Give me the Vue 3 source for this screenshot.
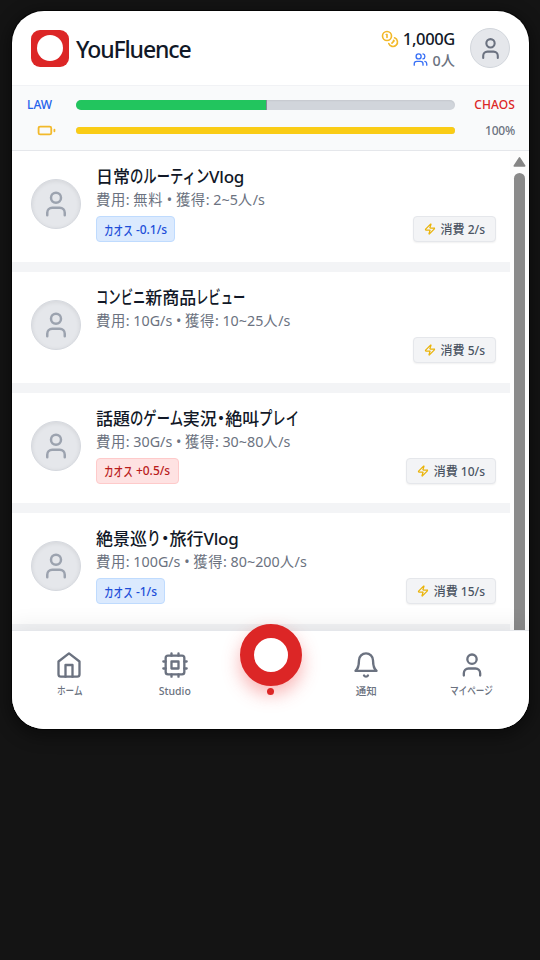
<script setup>
import { h } from 'vue'

const videos = [
  { title: '日常のルーティンVlog', squeeze: 0.785, info: '費用: 無料 • 獲得: 2~5人/s', chaos: '-0.1/s', tone: 'blue', cost: '2/s' },
  { title: 'コンビニ新商品レビュー', squeeze: 0.725, info: '費用: 10G/s • 獲得: 10~25人/s', cost: '5/s' },
  { title: '話題のゲーム実況・絶叫プレイ', squeeze: 0.785, info: '費用: 30G/s • 獲得: 30~80人/s', chaos: '+0.5/s', tone: 'red', cost: '10/s' },
  { title: '絶景巡り・旅行Vlog', squeeze: 0.82, info: '費用: 100G/s • 獲得: 80~200人/s', chaos: '-1/s', tone: 'blue', cost: '15/s' },
]

const icons = {
  user: ['M19 21v-2a4 4 0 0 0-4-4H9a4 4 0 0 0-4 4v2', 'M16 7a4 4 0 1 1-8 0a4 4 0 0 1 8 0'],
  users: ['M16 21v-2a4 4 0 0 0-4-4H6a4 4 0 0 0-4 4v2', 'M13 7a4 4 0 1 1-8 0a4 4 0 0 1 8 0', 'M22 21v-2a4 4 0 0 0-3-3.87', 'M16 3.13a4 4 0 0 1 0 7.75'],
  coins: ['M14 8a6 6 0 1 1-12 0a6 6 0 0 1 12 0', 'M18.09 10.37A6 6 0 1 1 10.34 18', 'M7 6h1v4', 'm16.71 13.88.7.71-2.82 2.82'],
  battery: ['M4 7h12a2 2 0 0 1 2 2v6a2 2 0 0 1-2 2H4a2 2 0 0 1-2-2V9a2 2 0 0 1 2-2z', 'M22 11v2'],
  zap: ['M4 14a1 1 0 0 1-.78-1.63l9.9-10.2a.5.5 0 0 1 .86.46l-1.92 6.02A1 1 0 0 0 13 10h7a1 1 0 0 1 .78 1.63l-9.9 10.2a.5.5 0 0 1-.86-.46l1.92-6.02A1 1 0 0 0 11 14z'],
  home: ['m3 9 9-7 9 7v11a2 2 0 0 1-2 2H5a2 2 0 0 1-2-2z', 'M9 22V12h6v10'],
  cpu: ['M6 4h12a2 2 0 0 1 2 2v12a2 2 0 0 1-2 2H6a2 2 0 0 1-2-2V6a2 2 0 0 1 2-2z', 'M9 9h6v6H9z', 'M15 2v2M15 20v2M2 15h2M2 9h2M20 15h2M20 9h2M9 2v2M9 20v2'],
  bell: ['M6 8a6 6 0 0 1 12 0c0 7 3 9 3 9H3s3-2 3-9', 'M10.3 21a1.94 1.94 0 0 0 3.4 0'],
}

const Icon = (props) =>
  h('svg', { viewBox: '0 0 24 24', fill: 'none', stroke: 'currentColor', 'stroke-width': 2, 'stroke-linecap': 'round', 'stroke-linejoin': 'round' },
    icons[props.name].map((d) => h('path', { d })))
Icon.props = ['name']

// Condensed kana: glyphs are squeezed and the freed width is taken back.
const KANA_SIZE = 1.07
const Kana = (props) =>
  h('span', { class: 'kana', style: { '--n': props.text.length, '--s': props.squeeze / KANA_SIZE } }, props.text)
Kana.props = ['text', 'squeeze']

// Splits text into kana, middle dot, kanji and Latin runs.
const runs = (text) =>
  (text.match(/・|[\u3040-\u30fa\u30fc-\u30ff]+|[\u4e00-\u9fff]+|[^\u3040-\u30ff\u4e00-\u9fff]+/g) || []).map((t) => ({
    t,
    kind: t === '・' ? 'mid' : /[\u3040-\u30ff]/.test(t) ? 'kana' : /[\u4e00-\u9fff]/.test(t) ? 'kanji' : 'latin',
  }))
</script>

<template>
  <div class="page">
    <main class="phone">
      <header class="header">
        <div class="logo"><i></i></div>
        <h1>YouFluence</h1>
        <div class="wallet">
          <div class="gold"><Icon name="coins" /><b>1,000G</b></div>
          <div class="fans"><Icon name="users" /><span>0人</span></div>
        </div>
        <div class="me"><Icon name="user" /></div>
      </header>

      <section class="stats">
        <div class="stat">
          <span class="law">LAW</span>
          <div class="track"><div class="fill green"></div></div>
          <span class="chaos-label">CHAOS</span>
        </div>
        <div class="stat second">
          <span class="battery"><Icon name="battery" /></span>
          <div class="track thin"><div class="fill yellow"></div></div>
          <span class="percent">100%</span>
        </div>
      </section>

      <section class="feed">
        <div class="list">
          <article v-for="v in videos" :key="v.title" class="row">
            <div class="avatar"><Icon name="user" /></div>
            <div class="body">
              <h2><template v-for="(r, i) in runs(v.title)" :key="i"><Kana v-if="r.kind === 'kana'" :text="r.t" :squeeze="v.squeeze" /><span v-else :class="r.kind">{{ r.t }}</span></template></h2>
              <p><span v-for="(r, i) in runs(v.info)" :key="i" :class="r.kind">{{ r.t }}</span></p>
              <div class="tags">
                <span v-if="v.chaos" class="tag" :class="v.tone"><Kana text="カオス" :squeeze="0.8" /><span>{{ ' ' + v.chaos }}</span></span>
                <span class="tag cost"><Icon name="zap" /><span>消費 {{ v.cost }}</span></span>
              </div>
            </div>
          </article>
        </div>
        <div class="scrollbar">
          <svg viewBox="0 0 12 10"><path d="M6 1.2 10.8 8.6H1.2z" /></svg>
          <div class="thumb"></div>
        </div>
      </section>

      <nav class="nav">
        <a class="item"><Icon name="home" /><Kana text="ホーム" :squeeze="0.82" /></a>
        <a class="item"><Icon name="cpu" /><span>Studio</span></a>
        <a class="live"><span class="ring"></span><span class="dot"></span></a>
        <a class="item"><Icon name="bell" /><span>通知</span></a>
        <a class="item"><Icon name="user" /><Kana text="マイページ" :squeeze="0.82" /></a>
      </nav>
    </main>
  </div>
</template>

<style>
body { background: #141414; }
.kana {
  display: inline-block;
  font-size: 1.07em;
  transform: scaleX(var(--s));
  transform-origin: 0 50%;
  margin-right: calc(var(--n) * (var(--s) - 1) * 1em);
  white-space: nowrap;
}
</style>

<style scoped>
* { box-sizing: border-box; }
.page {
  height: 960px;
  padding: 11px 11px 0 12px;
  overflow: hidden;
  background: #141414;
  font-family: "Noto Sans", "Noto Sans CJK JP", sans-serif;
  color: #111827;
}
svg { display: block; flex: none; }
h1, h2, p { margin: 0; white-space: nowrap; }
.phone {
  height: 718px;
  display: flex;
  flex-direction: column;
  background: #fff;
  border-radius: 32px;
  overflow: hidden;
  box-shadow: 0 0 0 1px #050505, 0 4px 16px 4px rgba(0, 0, 0, .4);
}
.header {
  height: 75px;
  flex: none;
  display: flex;
  align-items: center;
  padding: 0 19px 0 19px;
  border-bottom: 1px solid #f1f2f5;
}
.logo {
  width: 38px;
  height: 37px;
  border-radius: 9px;
  background: #dc2626;
  display: grid;
  place-items: center;
}
.logo i { width: 26px; height: 26px; border-radius: 50%; background: #fff; }
h1 {
  margin-left: 7px;
  padding-top: 2px;
  font-size: 23px;
  line-height: 32px;
  font-weight: 500;
  letter-spacing: -1.1px;
}
.wallet {
  margin-left: auto;
  margin-right: 15px;
  padding-top: 1px;
  display: flex;
  flex-direction: column;
  align-items: flex-end;
}
.gold, .fans { display: flex; align-items: center; white-space: nowrap; }
.gold { height: 22px; gap: 4px; font-size: 16.5px; }
.gold b { font-weight: 500; letter-spacing: -.35px; }
.gold svg { width: 18px; color: #f2b92b; stroke-width: 2.2; }
.fans { height: 20px; gap: 5px; font-size: 14.3px; color: #6b7280; font-weight: 500; }
.fans svg { width: 15px; color: #3b72f6; stroke-width: 2.2; }
.me {
  width: 40px;
  height: 40px;
  border: 1px solid #d1d5db;
  border-radius: 50%;
  background: #e5e7eb;
  display: grid;
  place-items: center;
  color: #6b7280;
}
.me svg { width: 25px; }
.stats {
  height: 65px;
  flex: none;
  padding: 6px 14px 6px 15px;
  background: #f9fafb;
  border-bottom: 1px solid #e5e7eb;
}
.stat {
  height: 25px;
  display: grid;
  grid-template-columns: 49px 379px 1fr;
  align-items: center;
  font-size: 12px;
  font-weight: 500;
}
.second { height: 27px; }
.law { color: #2563eb; }
.chaos-label { color: #dc2626; justify-self: end; letter-spacing: .1px; }
.percent { color: #6b7280; justify-self: end; letter-spacing: -.2px; font-size: 12px; }
.track { height: 10px; border-radius: 5px; background: #d1d5db; overflow: hidden; box-shadow: inset 0 1px 2px rgba(0, 0, 0, .06); }
.track.thin { height: 7px; }
.fill { height: 100%; }
.green { width: 191px; background: #22c55e; border-right: 1px solid #858b94; }
.yellow { width: 100%; background: #facc15; }
.battery { color: #f2b92b; padding-left: 10px; }
.battery svg { width: 19px; stroke-width: 2.3; }
.feed { flex: 1; min-height: 0; display: flex; overflow: hidden; }
.list { width: 498px; overflow: hidden; }
.row {
  height: 120.8px;
  padding: 0 14px 0 19px;
  display: flex;
  border-bottom: 10px solid #f3f4f6;
}
.avatar {
  width: 50px;
  height: 50px;
  margin-top: 28px;
  flex: none;
  border: 1px solid #d5d8de;
  border-radius: 50%;
  background: #e5e7eb;
  box-shadow: inset 0 1px 4px rgba(0, 0, 0, .08);
  display: grid;
  place-items: center;
  color: #9ca3af;
}
.avatar svg { width: 30px; }
.body { flex: 1; min-width: 0; margin-left: 15px; padding-top: 13px; }
h2 { height: 25px; line-height: 24px; font-size: 17px; font-weight: 500; }
h2 .latin { letter-spacing: -.2px; }
h2 .mid { font-feature-settings: "halt"; }
p { height: 22px; line-height: 22px; font-size: 14.3px; color: #6b7280; }
p .kanji { letter-spacing: .6px; }
.tags { display: flex; justify-content: space-between; margin-top: 5px; height: 26px; }
.tag {
  display: flex;
  align-items: center;
  height: 26px;
  padding: 0 7px;
  border: 1px solid;
  border-radius: 4px;
  font-size: 12px;
  font-weight: 500;
  white-space: pre;
}
.tag.blue { color: #1d4ed8; background: #dbeafe; border-color: #bfdbfe; }
.tag.red { color: #b91c1c; background: #fee2e2; border-color: #fecaca; padding: 0 8px 0 7px; }
.tag.cost {
  margin-left: auto;
  padding: 0 10px;
  gap: 5px;
  color: #4b5563;
  background: #f3f4f6;
  border-color: #e5e7eb;
  box-shadow: 0 1px 2px rgba(0, 0, 0, .06);
}
.tag.cost svg { width: 12px; color: #eab308; stroke-width: 2.5; }
.scrollbar { width: 19px; background: #fcfcfc; padding: 5px 0 0 3px; display: flex; flex-direction: column; align-items: flex-start; }
.scrollbar svg { width: 13px; height: 12px; fill: #858585; stroke: #858585; stroke-width: 1.5; stroke-linejoin: round; }
.thumb { width: 11.5px; flex: 1; margin: 5px 0 0 .5px; background: #898989; border-radius: 6px 6px 0 0; }
.nav {
  height: 99px;
  flex: none;
  position: relative;
  display: grid;
  grid-template-columns: 105.5px 105.5px 86px 105.5px 105.5px;
  padding: 1px 0 0 4.5px;
  background: #fff;
  border-top: 1px solid #e5e7eb;
  box-shadow: 0 -5px 20px rgba(0, 0, 0, .07);
}
.item {
  padding-top: 19px;
  display: flex;
  flex-direction: column;
  align-items: center;
  gap: 4px;
  color: #6b7280;
  font-size: 10.5px;
  line-height: 16px;
  font-weight: 500;
  white-space: nowrap;
}
.item svg { width: 28px; height: 28px; }
.live { display: flex; flex-direction: column; align-items: center; }
.ring {
  width: 62px;
  height: 62px;
  margin-top: -8px;
  flex: none;
  border: 14.5px solid #dc2626;
  border-radius: 50%;
  background: #fff;
  box-shadow: 0 8px 18px rgba(239, 68, 68, .4);
}
.dot { width: 7px; height: 7px; margin-top: 2px; border-radius: 50%; background: #dc2626; }
</style>
